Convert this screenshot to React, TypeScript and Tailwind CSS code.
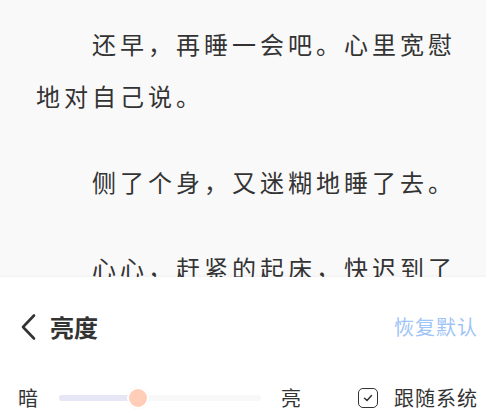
const paragraphs = [
  '还早，再睡一会吧。心里宽慰地对自己说。',
  '侧了个身，又迷糊地睡了去。',
  '心心，赶紧的起床，快迟到了',
];

function BackArrow() {
  return (
    <svg width="20" height="28" viewBox="0 0 20 28" fill="none">
      <path d="M16 2.5 L5 14 L16 25.5" stroke="#333" strokeWidth="2.6" strokeLinecap="round" strokeLinejoin="round" />
    </svg>
  );
}

function CheckBox() {
  return (
    <div className="flex h-[20px] w-[20px] items-center justify-center rounded-[5px] border-[1.5px] border-[#333]">
      <svg width="10" height="8" viewBox="0 0 10 8" fill="none">
        <path d="M1.5 4.2 L4 6.5 L8.5 1.5" stroke="#333" strokeWidth="1.5" strokeLinecap="round" strokeLinejoin="round" />
      </svg>
    </div>
  );
}

export default function App() {
  return (
    <div
      className="flex h-[419px] w-[486px] flex-col overflow-hidden bg-[#f9f9f9]"
      style={{ fontFamily: '"Noto Sans CJK SC", "Noto Sans", sans-serif' }}
    >
      {/* Reading content */}
      <div className="h-[277px] shrink-0 overflow-hidden pl-[36px] pr-[16px] pt-[18px]">
        {paragraphs.map((p) => (
          <p
            key={p}
            className="mb-[34px] indent-[56px] text-[24px] leading-[52px] tracking-[4px] text-[#333]"
          >
            {p}
          </p>
        ))}
      </div>

      {/* Brightness panel */}
      <div className="flex flex-1 flex-col bg-white shadow-[0_-1px_3px_rgba(0,0,0,0.04)]">
        <div className="flex h-[100px] items-center justify-between pl-[18px] pr-[8px]">
          <div className="flex items-center gap-[12px]">
            <BackArrow />
            <span className="text-[24px] font-bold text-[#333]">亮度</span>
          </div>
          <span className="text-[20px] tracking-[1px] text-[#9fc4f7]">恢复默认</span>
        </div>

        <div className="flex h-[42px] items-center pl-[18px] pr-[8px]">
          <span className="text-[20px] text-[#333]">暗</span>
          <div className="relative ml-[21px] h-[6px] w-[202px] rounded-full bg-[#f8f8f8]">
            <div className="h-full w-[79px] rounded-full bg-[#e6e6f6]" />
            <div className="absolute left-[68px] top-[-8px] h-[22px] w-[22px] rounded-full border-2 border-white bg-[#ffcdb8] shadow-[0_0_1px_rgba(0,0,0,0.08)]" />
          </div>
          <span className="ml-[20px] text-[20px] text-[#333]">亮</span>
          <div className="ml-auto flex items-center gap-[16px]">
            <CheckBox />
            <span className="text-[20px] tracking-[1px] text-[#333]">跟随系统</span>
          </div>
        </div>
      </div>
    </div>
  );
}
